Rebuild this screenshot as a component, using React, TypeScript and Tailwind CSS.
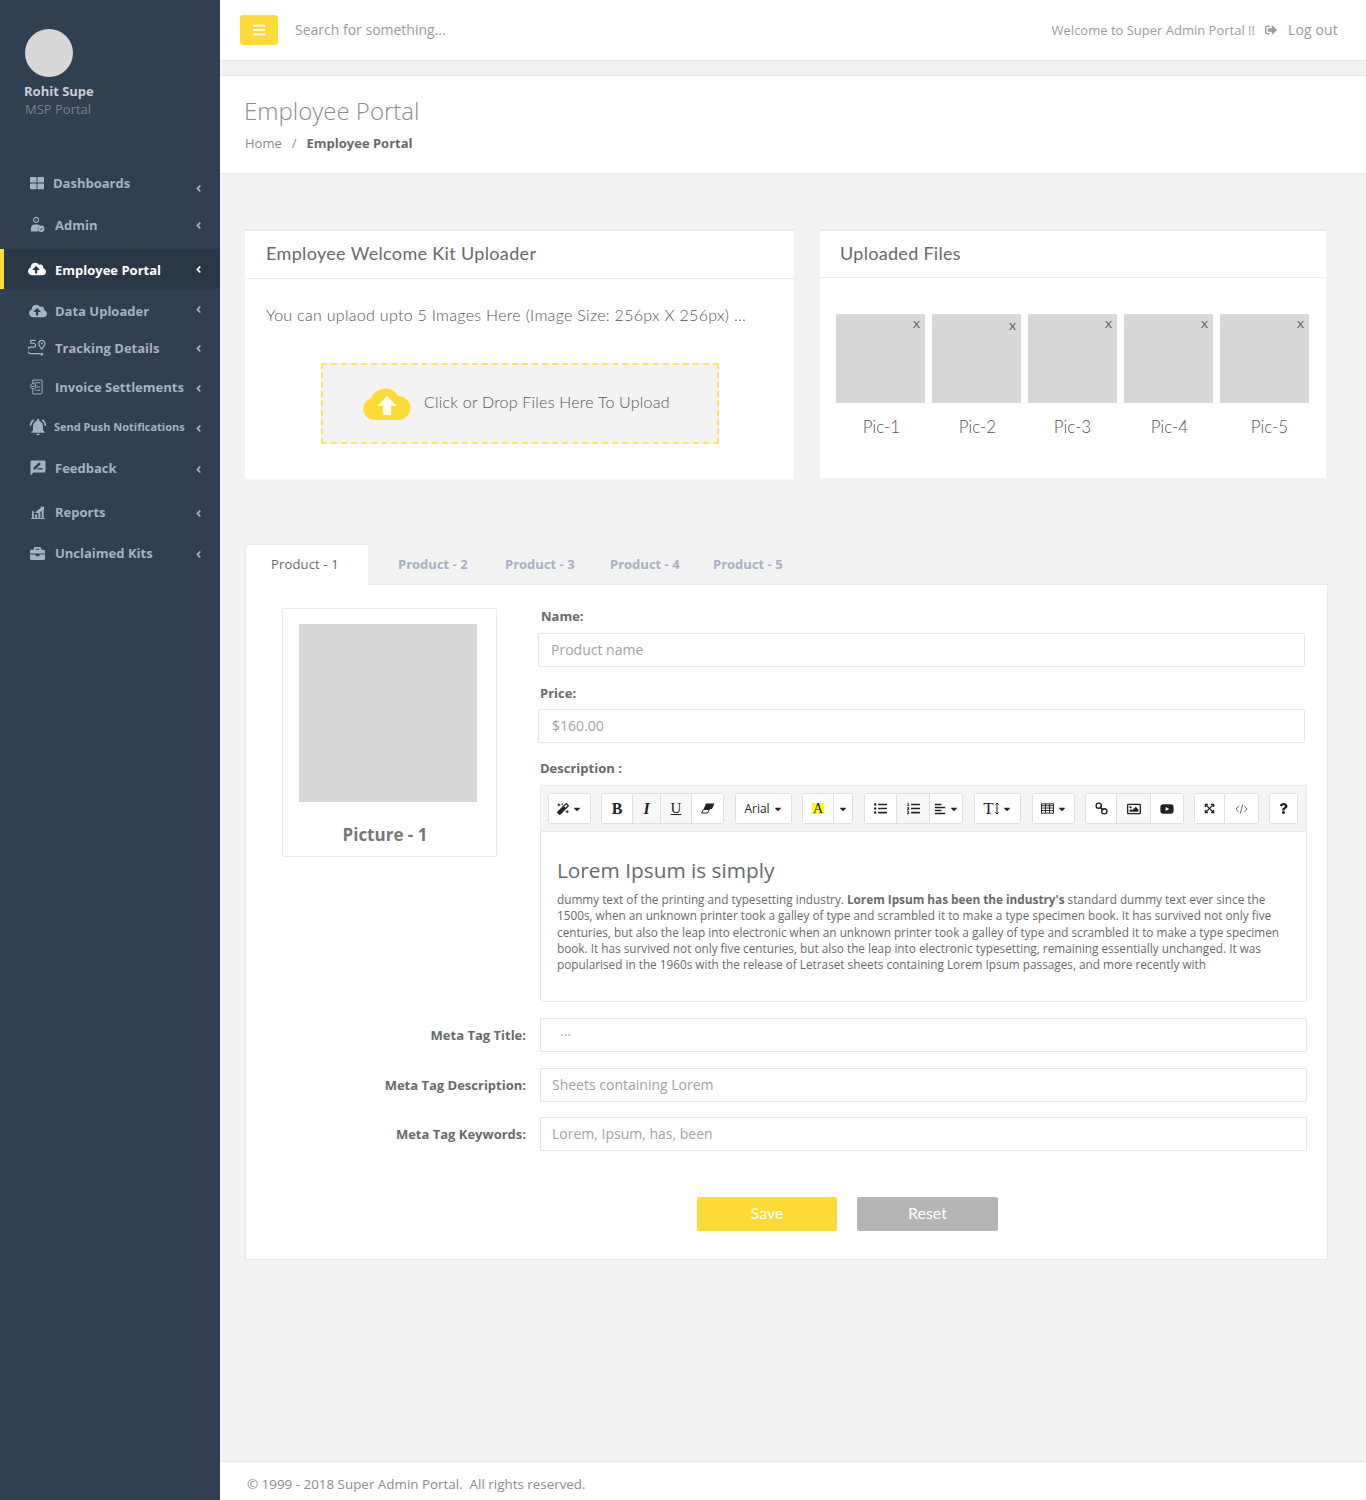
import React from 'react';
import {
  FaAlignLeft, FaAngleLeft, FaBars, FaBriefcase, FaCaretDown, FaCloudUploadAlt, FaExpandArrowsAlt,
  FaListOl, FaListUl, FaMagic, FaQuestion, FaRegImage, FaSignOutAlt, FaThLarge, FaYoutube,
} from 'react-icons/fa';
import { MdNotificationsActive, MdRateReview } from 'react-icons/md';

const AdminIcon = () => (
  <svg viewBox="0 0 16 18" className="w-[15px] h-[18px]" fill="currentColor">
    <circle cx="6.5" cy="3.5" r="2.6" fill="none" stroke="currentColor" strokeWidth="1.2" />
    <path d="M1 16v-3.5C1 10 3 8.5 5 8.5h3c1 0 2 .4 2.7 1a4 4 0 0 0-1.5 6.5z" />
    <circle cx="12" cy="13" r="3.4" />
    <path d="M10.4 13l1.2 1.2 2-2.2" fill="none" stroke="#2f4050" strokeWidth="1" />
  </svg>
);

const RouteIcon = () => (
  <svg viewBox="0 0 20 18" className="w-[19px] h-[18px]" fill="none" stroke="currentColor" strokeWidth="1.3">
    <path d="M8 1H3v3h3a2 2 0 0 1 0 4H3a2 2 0 0 0 0 7h10" />
    <circle cx="14.5" cy="15.5" r="1.4" fill="currentColor" stroke="none" />
    <path d="M14.5 1a3.2 3.2 0 0 0-3.2 3.2c0 2 3.2 6 3.2 6s3.2-4 3.2-6A3.2 3.2 0 0 0 14.5 1z" />
    <circle cx="14.5" cy="4.2" r="1" fill="currentColor" stroke="none" />
  </svg>
);

const InvoiceIcon = () => (
  <svg viewBox="0 0 14 17" className="w-[13px] h-[16px]" fill="none" stroke="currentColor" strokeWidth="1">
    <path d="M3 1h10v13a2 2 0 0 1-2 2H3z" />
    <path d="M5 4h6M5 12h6M7 8.5h4" />
    <circle cx="3.5" cy="7.5" r="2.8" fill="#2f4050" />
    <path d="M2.3 7.5l1 1 1.5-1.8" />
  </svg>
);

const ReportsIcon = () => (
  <svg viewBox="0 0 15 15" className="w-[14px] h-[14px]" fill="currentColor">
    <rect x="1" y="8" width="2" height="6" />
    <rect x="4.5" y="10" width="2" height="4" />
    <rect x="8" y="8" width="2" height="6" />
    <rect x="11.5" y="5" width="2" height="9" />
    <rect x="0" y="14" width="15" height="1" />
    <path d="M1 6l3 2 4-3 3-2-1-1h4v4l-1-1-5 4-4-1-3 0z" />
  </svg>
);

const UploadCloud = () => (
  <svg viewBox="0 0 48 33" className="w-[48px] h-[33px] shrink-0">
    <path d="M11 33a11 11 0 0 1-3-21.5A15 15 0 0 1 35 9a12 12 0 0 1 1 24z" fill="#ffdb38" />
    <path d="M24 9l-10 10h6v9h8v-9h6z" fill="#fff" />
  </svg>
);

// summernote glyphs that the icon packages draw too heavily
const EraserIcon = () => (
  <svg viewBox="0 0 14 11" className="w-[14px] h-[11px]" fill="currentColor">
    <path d="M5 .5h8.5L11 6H2.6z" />
    <path d="M2.3 6.5H8.5L6.5 10H.6z" fill="none" stroke="currentColor" strokeWidth="1" />
  </svg>
);

const ChainIcon = () => (
  <svg viewBox="0 0 14 14" className="w-[13px] h-[13px]" fill="none" stroke="currentColor" strokeWidth="1.5">
    <circle cx="4" cy="4" r="2.8" />
    <circle cx="10" cy="10" r="2.8" />
    <path d="M5 5l4 4" />
  </svg>
);

const GridIcon = () => (
  <svg viewBox="0 0 14 11" className="w-[13px] h-[11px]" fill="none" stroke="currentColor" strokeWidth="1">
    <rect x=".5" y=".5" width="13" height="10" />
    <path d="M.5 2.5h13M.5 5h13M.5 7.7h13M4.8.5v10M9.2.5v10" />
  </svg>
);

const CodeIcon = () => (
  <svg viewBox="0 0 14 11" className="w-[13px] h-[10px]" fill="none" stroke="#555" strokeWidth="1">
    <path d="M4 2L1 5.5 4 9M10 2l3 3.5L10 9M8.3 .5L5.7 10.5" />
  </svg>
);

const SizeArrow = () => (
  <svg viewBox="0 0 4 13" className="w-[4px] h-[13px] ml-px" fill="none" stroke="currentColor" strokeWidth="1">
    <path d="M2 1v11M.5 2.5L2 1l1.5 1.5M.5 10.5L2 12l1.5-1.5" />
  </svg>
);

const navItems = [
  { label: 'Dashboards', icon: <FaThLarge size={14} />, row: 'h-[42px] pl-[30px]', text: 'ml-[9px] mt-[2px]', chevron: 'mt-[10px]' },
  { label: 'Admin', icon: <AdminIcon />, row: 'h-[42px] pl-[30px] mb-[3px]', text: 'ml-[10px] mt-[2px]', chevron: 'mt-0' },
  { label: 'Employee Portal', icon: <FaCloudUploadAlt size={18} />, row: 'h-[40px] pl-[24px] bg-[#293846] border-l-[4px] border-[#ffdb38] text-white', text: 'ml-[9px] mt-[3px]', chevron: 'mt-0' },
  { label: 'Data Uploader', icon: <FaCloudUploadAlt size={18} />, row: 'h-[44px] pl-[29px]', text: 'ml-[8px] mt-[2px]', chevron: 'mt-[-4px]' },
  { label: 'Tracking Details', icon: <RouteIcon />, row: 'h-[30px] pl-[28px]', text: 'ml-[8px] mt-[2px]', chevron: 'mt-0' },
  { label: 'Invoice Settlements', icon: <InvoiceIcon />, row: 'h-[48px] pl-[30px]', text: 'ml-[12px] mt-[2px]', chevron: 'mt-[2px]' },
  { label: 'Send Push Notifications', icon: <MdNotificationsActive size={20} />, row: 'h-[32px] pl-[28px]', text: 'ml-[6px] text-[11px]', chevron: 'mt-[2px]' },
  { label: 'Feedback', icon: <MdRateReview size={18} />, row: 'h-[50px] pl-[29px]', text: 'ml-[8px] mt-[2px]', chevron: 'mt-[2px]' },
  { label: 'Reports', icon: <ReportsIcon />, row: 'h-[38px] pl-[31px]', text: 'ml-[10px] mt-[2px]', chevron: 'mt-[2px]' },
  { label: 'Unclaimed Kits', icon: <FaBriefcase size={15} />, row: 'h-[44px] pl-[30px]', text: 'ml-[10px] mt-[2px]', chevron: 'mt-[2px]' },
];

const Sidebar = () => (
  <aside className="w-[220px] shrink-0 bg-[#2f4050] text-[#a7b1c2]">
    <div className="pl-[25px] pt-[29px] h-[162px]">
      <div className="w-[48px] h-[48px] rounded-full bg-[#d8d8d8]" />
      <div className="mt-[5px] text-[13px] leading-[18px] font-bold text-[#c9ced8] -ml-px">Rohit Supe</div>
      <div className="text-[13px] leading-[18px] text-[#77818f]">MSP Portal</div>
    </div>
    <nav className="text-[13px] font-bold">
      {navItems.map((item) => (
        <div key={item.label} className={`flex items-center ${item.row}`}>
          <span className="flex items-center justify-center">{item.icon}</span>
          <span className={`whitespace-nowrap ${item.text}`}>{item.label}</span>
          <span className={`ml-auto mr-[16px] ${item.chevron}`}>
            <FaAngleLeft size={11} />
          </span>
        </div>
      ))}
    </nav>
  </aside>
);

const TopBar = () => (
  <header className="h-[61px] bg-white border-b border-[#e7eaec] flex items-center pl-[20px] pr-[28px]">
    <button className="w-[38px] h-[30px] rounded-[3px] bg-[#ffdb38] text-white flex items-center justify-center">
      <FaBars size={14} />
    </button>
    <input
      readOnly
      placeholder="Search for something..."
      className="ml-[17px] mb-[2px] w-[300px] text-[14px] outline-none placeholder:text-[#999c9e]"
    />
    <div className="ml-auto flex items-center text-[#999c9e]">
      <span className="text-[13px] mt-[2px] mr-px">Welcome to Super Admin Portal !!</span>
      <FaSignOutAlt size={12} className="ml-[9px]" />
      <span className="ml-[11px] text-[14px] mb-[2px] tracking-[0.15px]">Log out</span>
    </div>
  </header>
);

const PageHeading = () => (
  <section className="mt-[14px] h-[99px] bg-white border-y border-[#e7eaec] pl-[24px] pt-[18px]">
    <h2 className="text-[24px] leading-[34px] font-light text-[#8a8c8e]">Employee Portal</h2>
    <div className="mt-[6px] ml-px text-[13px] leading-[18px] flex text-[#8a8c8e]">
      <span>Home</span>
      <span className="mx-[10px]">/</span>
      <strong className="font-bold text-[#676a6c]">Employee Portal</strong>
    </div>
  </section>
);

const UploaderPanel = () => (
  <div className="w-[549px] h-[250px] bg-white border-t-[2px] border-[#e7eaec] font-['Lato',sans-serif] text-[#676a6c]">
    <div className="h-[48px] border-b border-[#e7eaec] flex items-center pl-[21px] pb-[2px] text-[18px] tracking-[0.34px]">
      Employee Welcome Kit Uploader
    </div>
    <p className="ml-[21px] mt-[26px] text-[16px] leading-[20px] whitespace-nowrap font-light text-[#555] tracking-[0.3px]">
      You can uplaod upto 5 Images Here (Image Size: 256px X 256px) ...
    </p>
    <div className="mt-[38px] ml-[76px] w-[398px] h-[81px] bg-[#f3f3f3] border-2 border-dashed border-[#ffe262] flex items-center pl-[40px]">
      <UploadCloud />
      <span className="ml-[13px] mb-[4px] text-[16px] font-light text-[#555] tracking-[0.22px]">Click or Drop Files Here To Upload</span>
    </div>
  </div>
);

const pics = [
  { n: 'Pic-1', x: 'pt-[4px]', label: 'pl-[2px]' },
  { n: 'Pic-2', x: 'pt-[6px]', label: 'pl-[2px]' },
  { n: 'Pic-3', x: 'pt-[4px]', label: '' },
  { n: 'Pic-4', x: 'pt-[4px]', label: 'pl-[2px]' },
  { n: 'Pic-5', x: 'pt-[4px]', label: 'pl-[10px]' },
];

const UploadedPanel = () => (
  <div className="ml-[26px] w-[506px] h-[249px] bg-white border-t-[2px] border-[#e7eaec] font-['Lato',sans-serif] text-[#676a6c]">
    <div className="h-[47px] border-b border-[#e7eaec] flex items-center pl-[20px] pb-[2px] text-[18px] tracking-[0.3px]">
      Uploaded Files
    </div>
    <div className="flex gap-[7px] ml-[16px] mt-[36px]">
      {pics.map((p) => (
        <div key={p.n} className="w-[89px]">
          <div className={`h-[89px] bg-[#d8d8d8] text-right pr-[5px] text-[14px] leading-[10px] ${p.x}`}>x</div>
          <div className={`mt-[14px] text-center text-[17px] leading-[20px] font-light text-[#555] ${p.label}`}>{p.n}</div>
        </div>
      ))}
    </div>
  </div>
);

const Tabs = () => (
  <div className="flex h-[40px] text-[13px] font-bold text-[#a7b1c2] leading-[40px]">
    <div className="w-[123px] pl-[25px] bg-white border-l border-t border-[#e7eaec] rounded-t-[3px] text-[#676a6c] font-normal leading-[38px] tracking-[0.15px] -mb-px relative">Product - 1</div>
    <div className="ml-[30px] w-[107px]">Product - 2</div>
    <div className="w-[105px]">Product - 3</div>
    <div className="w-[103px]">Product - 4</div>
    <div>Product - 5</div>
  </div>
);

const Btn = ({ w, active, children }: { w: string; active?: boolean; children: React.ReactNode }) => (
  <span className={`h-[29px] flex items-center justify-center text-[#222] border-r border-[#dee0e2] last:border-r-0 ${w} ${active ? 'bg-[#f8f8f8]' : 'bg-white'}`}>
    {children}
  </span>
);

const Group = ({ children, ml }: { children: React.ReactNode; ml: string }) => (
  <div className={`flex border border-[#dee0e2] rounded-[3px] box-content h-[29px] -my-px ${ml}`}>{children}</div>
);

const Caret = () => <FaCaretDown size={10} className="ml-[3px]" />;

const EditorToolbar = () => (
  <div className="h-[46px] bg-[#f5f5f5] border-b border-[#e7eaec] flex items-center pl-[7px] font-normal">
    <Group ml="">
      <Btn w="w-[41px]"><FaMagic size={12} /><Caret /></Btn>
    </Group>
    <Group ml="ml-[10px]">
      <Btn w="w-[31px]"><span className="font-['Liberation_Serif',serif] font-bold text-[16px]">B</span></Btn>
      <Btn w="w-[28px]" active><span className="font-['Liberation_Serif',serif] font-bold italic text-[16px]">I</span></Btn>
      <Btn w="w-[31px]" active><span className="font-['Liberation_Serif',serif] underline text-[15px]">U</span></Btn>
      <Btn w="w-[31px]"><EraserIcon /></Btn>
    </Group>
    <Group ml="ml-[11px]">
      <Btn w="w-[55px]"><span className="text-[12px] font-['Open_Sans',sans-serif]">Arial</span><Caret /></Btn>
    </Group>
    <Group ml="ml-[10px]">
      <Btn w="w-[31px]"><span className="bg-[#ffff00] leading-[11px] px-px text-[14px] font-['Liberation_Serif',serif]">A</span></Btn>
      <Btn w="w-[18px]"><FaCaretDown size={10} /></Btn>
    </Group>
    <Group ml="ml-[11px]">
      <Btn w="w-[32px]"><FaListUl size={13} /></Btn>
      <Btn w="w-[33px]" active><FaListOl size={13} /></Btn>
      <Btn w="w-[32px]"><FaAlignLeft size={12} /><Caret /></Btn>
    </Group>
    <Group ml="ml-[11px]">
      <Btn w="w-[45px]"><span className="font-['Liberation_Serif',serif] text-[17px] leading-[17px]">T</span><SizeArrow /><Caret /></Btn>
    </Group>
    <Group ml="ml-[11px]">
      <Btn w="w-[41px]"><GridIcon /><Caret /></Btn>
    </Group>
    <Group ml="ml-[10px]">
      <Btn w="w-[31px]"><ChainIcon /></Btn>
      <Btn w="w-[34px]" active><FaRegImage size={14} /></Btn>
      <Btn w="w-[32px]"><FaYoutube size={14} /></Btn>
    </Group>
    <Group ml="ml-[10px]">
      <Btn w="w-[30px]"><FaExpandArrowsAlt size={11} /></Btn>
      <Btn w="w-[33px]"><CodeIcon /></Btn>
    </Group>
    <Group ml="ml-[10px]">
      <Btn w="w-[27px]"><FaQuestion size={11} /></Btn>
    </Group>
  </div>
);

const Editor = () => (
  <div className="w-[767px] h-[217px] ml-[2px] border border-[#e7eaec] rounded-[2px] bg-white">
    <EditorToolbar />
    <div className="pl-[16px] pt-[23px] text-[#676a6c] font-normal">
      <h3 className="text-[20.8px] leading-[30px]">Lorem Ipsum is simply</h3>
      <p className="mt-[6px] text-[11.77px] leading-[16.3px] whitespace-nowrap">
        dummy text of the printing and typesetting industry. <strong className="font-bold">Lorem Ipsum has been the industry's</strong> standard dummy text ever since the<br />
        1500s, when an unknown printer took a galley of type and scrambled it to make a type specimen book. It has survived not only five<br />
        centuries, but also the leap into electronic when an unknown printer took a galley of type and scrambled it to make a type specimen<br />
        book. It has survived not only five centuries, but also the leap into electronic typesetting, remaining essentially unchanged. It was<br />
        popularised in the 1960s with the release of Letraset sheets containing Lorem Ipsum passages, and more recently with
      </p>
    </div>
  </div>
);

const TextField = ({ placeholder, className }: { placeholder: string; className: string }) => (
  <input
    readOnly
    placeholder={placeholder}
    className={`h-[34px] border border-[#e5e6e7] rounded-[1px] pb-[2px] text-[14px] outline-none bg-white placeholder:text-[#a0a2a4] ${className}`}
  />
);

const metaRows = [
  { label: 'Meta Tag Title:', placeholder: '···', row: 'mt-[16px]', input: 'pl-[19px]' },
  { label: 'Meta Tag Description:', placeholder: 'Sheets containing Lorem', row: 'mt-[16px]', input: 'pl-[11px]' },
  { label: 'Meta Tag Keywords:', placeholder: 'Lorem, Ipsum, has, been', row: 'mt-[15px]', input: 'pl-[11px]' },
];

const ProductForm = () => (
  <div className="h-[676px] bg-white border border-[#e7eaec] pt-[23px]">
    <div className="flex">
      <div className="ml-[36px] w-[215px] h-[249px] border border-[#e7eaec] rounded-[2px] shrink-0 pl-[16px] pt-[15px]">
        <div className="w-[178px] h-[178px] bg-[#d8d8d8]" />
        <div className="mt-[21px] text-center pr-[25px] text-[17px] leading-[24px] font-bold text-[#777]">Picture - 1</div>
      </div>
      <div className="ml-[41px] flex flex-col text-[13px] text-[#676a6c] font-bold">
        <label className="ml-[3px] -mt-px leading-[18px]">Name:</label>
        <TextField placeholder="Product name" className="mt-[8px] w-[767px] font-normal px-[12px]" />
        <label className="ml-[2px] mt-[17px] leading-[18px]">Price:</label>
        <TextField placeholder="$160.00" className="mt-[7px] w-[767px] font-normal pl-[13px]" />
        <label className="ml-[2px] mt-[16px] mb-[8px] leading-[18px]">Description :</label>
        <Editor />
      </div>
    </div>
    {metaRows.map((m) => (
      <div key={m.label} className={`flex items-center ${m.row}`}>
        <label className="w-[280px] mt-[2px] text-right text-[13px] font-bold text-[#676a6c]">{m.label}</label>
        <TextField placeholder={m.placeholder} className={`ml-[14px] w-[767px] ${m.input}`} />
      </div>
    ))}
    <div className="flex mt-[46px] ml-[451px] font-['Lato',sans-serif] text-[16px] text-white">
      <button className="w-[140px] h-[34px] pb-[2px] bg-[#ffdb38] rounded-[2px]">Save</button>
      <button className="ml-[20px] w-[141px] h-[34px] pb-[2px] bg-[#b5b5b5] rounded-[2px]">Reset</button>
    </div>
  </div>
);

export default function App() {
  return (
    <div className="flex h-[1500px] bg-[#f3f3f4] font-['Open_Sans',sans-serif] overflow-hidden">
      <Sidebar />
      <main className="flex-1 flex flex-col min-w-0">
        <TopBar />
        <PageHeading />
        <div className="flex mt-[55px] ml-[25px]">
          <UploaderPanel />
          <UploadedPanel />
        </div>
        <div className="mt-[65px] ml-[25px] w-[1083px]">
          <Tabs />
          <ProductForm />
        </div>
        <footer className="mt-auto h-[39px] bg-white border-t border-[#e7eaec] pl-[27px] pt-[13px] text-[13.4px] leading-[18px] text-[#8a8c8e]">
          © 1999 - 2018 Super Admin Portal.&nbsp; All rights reserved.
        </footer>
      </main>
    </div>
  );
}
